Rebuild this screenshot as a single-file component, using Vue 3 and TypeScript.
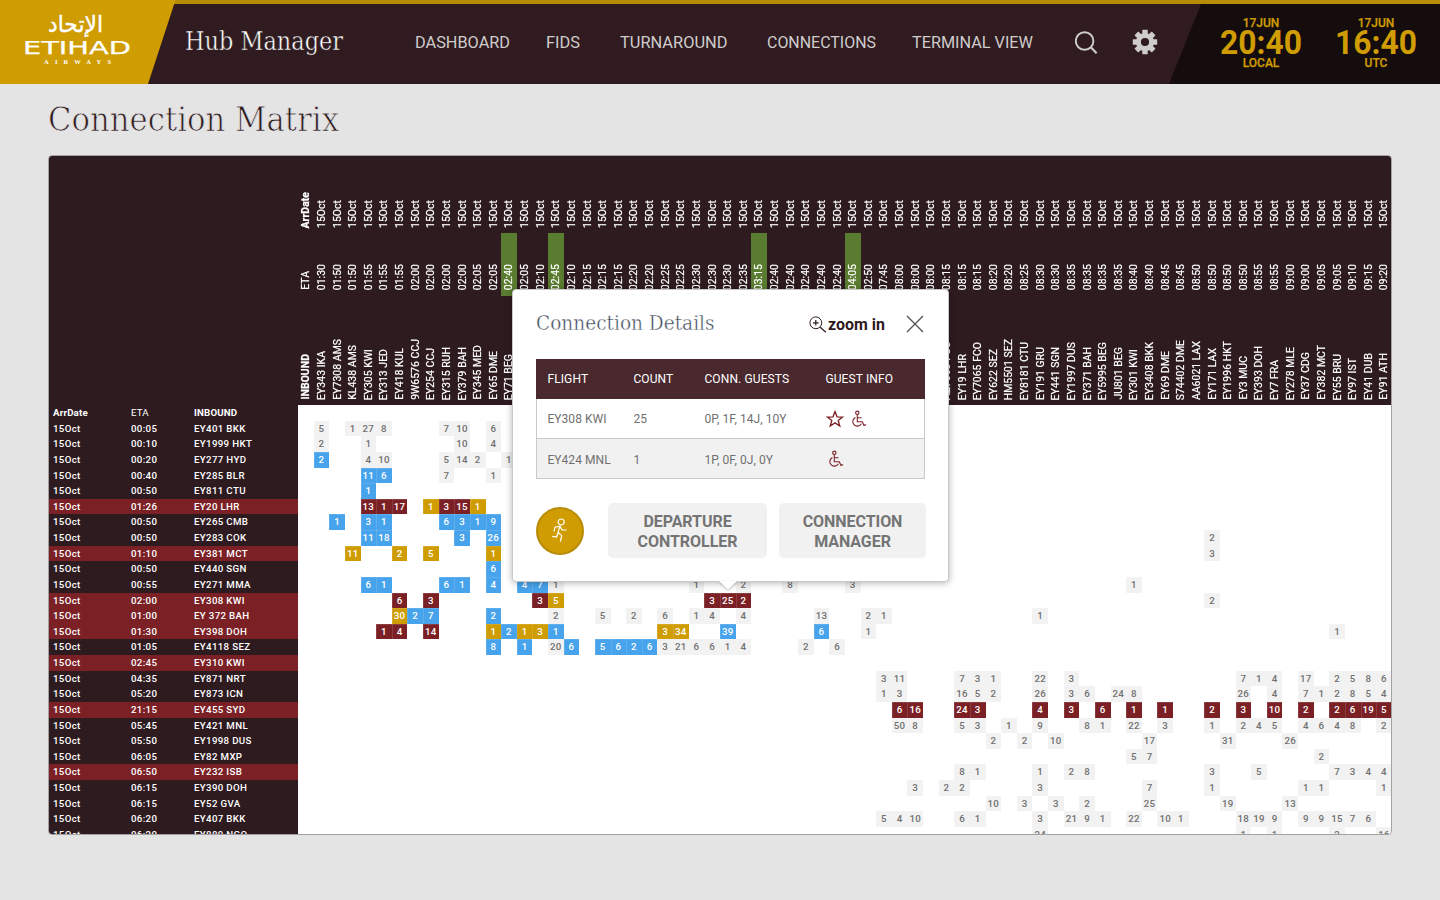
<script setup lang="ts">
import { h, type FunctionalComponent } from 'vue'

interface FitProps { text: string; w: number; size: number; base: number; height: number }

/* One line of text set to an exact measure */
const FitText: FunctionalComponent<FitProps> = (p) =>
  h('svg', { width: p.w, height: p.height, style: { overflow: 'visible', display: 'block' } }, [
    h('text', {
      x: 0, y: p.base, 'font-size': p.size, textLength: p.w, lengthAdjust: 'spacingAndGlyphs', fill: 'currentColor',
    }, p.text),
  ])
FitText.props = ['text', 'w', 'size', 'base', 'height']

const nav = [
  { text: 'DASHBOARD', w: 95, gap: 36 },
  { text: 'FIDS', w: 34, gap: 40 },
  { text: 'TURNAROUND', w: 107.5, gap: 39.5 },
  { text: 'CONNECTIONS', w: 109, gap: 36 },
  { text: 'TERMINAL VIEW', w: 121, gap: 0 },
]

const clocks = [
  { date: '17JUN', time: '20:40', zone: 'LOCAL' },
  { date: '17JUN', time: '16:40', zone: 'UTC' },
]

const etas = (
  '01:30 01:50 01:50 01:55 01:55 01:55 02:00 02:00 02:00 02:00 02:05 02:05 02:40* 02:05 02:10 02:45* ' +
  '02:10 02:15 02:15 02:15 02:20 02:20 02:25 02:25 02:30 02:30 02:30 02:35 03:15* 02:40 02:40 02:40 02:40 02:40 ' +
  '04:05* 02:50 07:45 08:00 08:00 08:00 08:15 08:15 08:15 08:20 08:20 08:25 08:30 08:30 08:35 08:35 08:35 08:35 ' +
  '08:40 08:40 08:45 08:45 08:50 08:50 08:50 08:50 08:55 08:55 09:00 09:00 09:05 09:05 09:10 09:15 09:20'
).split(' ')

const firstFlights = 'EY343 IKA,EY7308 AMS,KL438 AMS,EY305 KWI,EY313 JED,EY418 KUL,9W6576 CCJ,EY254 CCJ,EY315 RUH,EY379 BAH,EY345 MED,EY65 DME,EY71 BEG'.split(',')
const lastFlights = (
  'AZ7063 FCO,EY19 LHR,EY7065 FCO,EY622 SEZ,HM5501 SEZ,EY8181 CTU,EY191 GRU,EY441 SGN,EY1997 DUS,EY371 BAH,EY5995 BEG,' +
  'JU801 BEG,EY301 KWI,EY3408 BKK,EY69 DME,S74402 DME,AA6021 LAX,EY171 LAX,EY1996 HKT,EY3 MUC,EY393 DOH,EY7 FRA,' +
  'EY278 MLE,EY37 CDG,EY382 MCT,EY55 BRU,EY97 IST,EY41 DUB,EY91 ATH'
).split(',')

const columns = etas.map((eta, i) => ({
  eta: eta.replace('*', ''),
  flagged: eta.endsWith('*'),
  flight: i < 13 ? firstFlights[i] : i >= 40 ? lastFlights[i - 40] : '',
}))

/* time | flight | column:count with b = blue, r = red, y = gold; a leading ! flags the row */
const source = `00:05|EY401 BKK|0:5 2:1 3:27 4:8 8:7 9:10 11:6
00:10|EY1999 HKT|0:2 3:1 9:10 11:4
00:20|EY277 HYD|0:2b 3:4 4:10 8:5 9:14 10:2 12:1
00:40|EY285 BLR|3:11b 4:6b 8:7 11:1
00:50|EY811 CTU|3:1b
!01:26|EY20 LHR|3:13r 4:1r 5:17r 7:1y 8:3r 9:15r 10:1y
00:50|EY265 CMB|1:1b 3:3b 4:1b 8:6b 9:3b 10:1b 11:9b
00:50|EY283 COK|3:11b 4:18b 9:3b 11:26b 57:2
!01:10|EY381 MCT|2:11y 5:2y 7:5y 11:1y 57:3
00:50|EY440 SGN|11:6b
00:55|EY271 MMA|3:6b 4:1b 8:6b 9:1b 11:4b 13:4b 14:7b 15:1 24:1 27:2 30:8 34:3 52:1
!02:00|EY308 KWI|5:6r 7:3r 14:3r 15:5y 25:3r 26:25r 27:2r 57:2
!01:00|EY 372 BAH|5:30y 6:2b 7:7b 11:2b 15:2 18:5 20:2 22:6 24:1 25:4 27:4 32:13 35:2 36:1 46:1
!01:30|EY398 DOH|4:1r 5:4r 7:14r 11:1y 12:2b 13:1y 14:3y 15:1b 22:3y 23:34y 26:39b 32:6b 35:1 65:1
01:05|EY4118 SEZ|11:8b 13:1b 15:20 16:6b 18:5b 19:6b 20:2b 21:6b 22:3 23:21 24:6 25:6 26:1 27:4 31:2 33:6
!02:45|EY310 KWI|
04:35|EY871 NRT|36:3 37:11 41:7 42:3 43:1 46:22 48:3 59:7 60:1 61:4 63:17 65:2 66:5 67:8 68:6
05:20|EY873 ICN|36:1 37:3 41:16 42:5 43:2 46:26 48:3 49:6 51:24 52:8 59:26 61:4 63:7 64:1 65:2 66:8 67:5 68:4
!21:15|EY455 SYD|37:6r 38:16r 41:24r 42:3r 46:4r 48:3r 50:6r 52:1r 54:1r 57:2r 59:3r 61:10r 63:2r 65:2r 66:6r 67:19r 68:5r
05:45|EY421 MNL|37:50 38:8 41:5 42:3 44:1 46:9 49:8 50:1 52:22 54:3 57:1 59:2 60:4 61:5 63:4 64:6 65:4 66:8 68:2
05:50|EY1998 DUS|43:2 45:2 47:10 53:17 58:31 62:26
06:05|EY82 MXP|52:5 53:7 64:2
!06:50|EY232 ISB|41:8 42:1 46:1 48:2 49:8 57:3 60:5 65:7 66:3 67:4 68:4
06:15|EY390 DOH|38:3 40:2 41:2 46:3 53:7 57:1 63:1 64:1 68:1
06:15|EY52 GVA|43:10 45:3 47:3 49:2 53:25 58:19 62:13
06:20|EY407 BKK|36:5 37:4 38:10 41:6 42:1 46:3 48:21 49:9 50:1 52:22 54:10 55:1 59:18 60:19 61:9 63:9 64:9 65:15 66:7 67:6
06:20|EY889 NGO|46:24 59:1 61:1 65:2 68:16`

const rows = source.split('\n').map((line) => {
  const [time, flight, list] = line.split('|')
  return {
    late: time.startsWith('!'),
    eta: time.replace('!', ''),
    flight,
    cells: list.split(' ').filter(Boolean).map((c) => {
      const [col, val] = c.split(':')
      return { col: Number(col), n: parseInt(val), tone: /[bry]$/.test(val) ? val.slice(-1) : 'g' }
    }),
  }
})

const details = [
  { flight: 'EY308 KWI', count: 25, guests: '0P, 1F, 14J, 10Y', star: true },
  { flight: 'EY424 MNL', count: 1, guests: '1P, 0F, 0J, 0Y', star: false },
]
</script>

<template>
  <div class="page">
    <header class="top">
      <div class="logo">
        <svg width="176" height="84" viewBox="0 0 176 84">
          <path d="M0 0H175.5L148 84H0Z" fill="#cf9c02" />
          <g fill="#fff">
            <text class="arabic" x="48" y="31.5" textLength="55" lengthAdjust="spacingAndGlyphs">الإتحاد</text>
            <text class="wordmark" x="23" y="54.3" textLength="108" lengthAdjust="spacingAndGlyphs">ETIHAD</text>
            <text class="sub" x="44" y="64" textLength="67">AIRWAYS</text>
          </g>
        </svg>
      </div>
      <FitText class="slab product" text="Hub Manager" :w="158" :size="25.5" :base="50" :height="84" />
      <nav class="nav">
        <FitText v-for="n in nav" :key="n.text" class="navitem" :text="n.text" :w="n.w" :size="16.8" :base="48" :height="84" :style="{ marginRight: n.gap + 'px' }" />
      </nav>
      <svg class="search" width="24" height="24" viewBox="0 0 24 24" fill="none" stroke="#cfcccc" stroke-width="1.9">
        <circle cx="9.6" cy="10" r="8.8" /><path d="M15.6 16l6 6.2" stroke-width="2.1" />
      </svg>
      <svg class="gear" width="26" height="26" viewBox="-13 -13 26 26">
        <g fill="#cfcccc">
          <rect v-for="a in 8" :key="a" x="-2.7" y="-12.2" width="5.4" height="6" rx=".5" :transform="`rotate(${a * 45})`" />
        </g>
        <circle r="6.6" fill="none" stroke="#cfcccc" stroke-width="5" />
      </svg>
      <div class="clocks">
        <div v-for="c in clocks" :key="c.zone" class="clock">
          <span class="small">{{ c.date }}</span>
          <FitText class="time" :text="c.time" :w="82" :size="32.5" :base="24" :height="26" />
          <span class="small">{{ c.zone }}</span>
        </div>
      </div>
    </header>

    <FitText class="slab title" text="Connection Matrix" :w="291" :size="33" :base="47" :height="71" />

    <main class="card">
      <section class="heads">
        <div class="vcol bold">
          <div class="v date"><span>ArrDate</span></div>
          <div class="v eta"><span class="plain">ETA</span></div>
          <div class="v inb"><span>INBOUND</span></div>
        </div>
        <div v-for="(c, i) in columns" :key="i" class="vcol">
          <div class="v date"><span>15Oct</span></div>
          <div class="v eta" :class="{ flagged: c.flagged }"><span>{{ c.eta }}</span></div>
          <div class="v inb"><span>{{ c.flight }}</span></div>
        </div>
      </section>
      <section class="body">
        <div class="row">
          <div class="side head"><b>ArrDate</b><span>ETA</span><b>INBOUND</b></div>
        </div>
        <div v-for="(r, i) in rows" :key="i" class="row">
          <div class="side" :class="{ late: r.late }"><span>15Oct</span><span>{{ r.eta }}</span><span>{{ r.flight }}</span></div>
          <div class="cells">
            <span v-for="c in r.cells" :key="c.col" class="cell" :class="c.tone" :style="{ gridColumn: c.col + 2 }">{{ c.n }}</span>
          </div>
        </div>
      </section>
    </main>

    <div class="modal">
      <div class="mhead">
        <FitText class="slab mtitle" text="Connection Details" :w="178.5" :size="20.5" :base="20" :height="28" />
        <svg class="mag" width="18" height="18" viewBox="0 0 18 18" fill="none" stroke="#2e1a1e" stroke-width="1">
          <circle cx="6.8" cy="6.8" r="5.9" /><path d="M11.2 11.2l5.6 5M6.8 4v5.6M4 6.8h5.6" stroke-width="1.2" />
        </svg>
        <FitText class="zoomin" text="zoom in" :w="57" :size="16" :base="20" :height="28" />
        <svg class="close" width="18" height="18" viewBox="0 0 18 18" stroke="#555" stroke-width="1.4"><path d="M1 1l16 16M17 1L1 17" /></svg>
      </div>
      <div class="mtable">
        <div class="mrow mth"><span>FLIGHT</span><span>COUNT</span><span>CONN. GUESTS</span><span>GUEST INFO</span></div>
        <div v-for="d in details" :key="d.flight" class="mrow">
          <span>{{ d.flight }}</span><span>{{ d.count }}</span><span>{{ d.guests }}</span>
          <span class="icons" :class="{ solo: !d.star }">
            <svg v-if="d.star" width="18" height="18" viewBox="0 0 18 18" fill="none" stroke="#7b2024" stroke-width="1.3">
              <path d="M9 1.6l2 5.2 5.6.2-4.4 3.5 1.6 5.6L9 12.9l-4.8 3.2 1.6-5.6L1.4 7l5.6-.2z" />
            </svg>
            <svg width="16" height="18" viewBox="0 0 16 18" fill="none" stroke="#7b2024" stroke-width="1.1">
              <circle cx="6.3" cy="2.8" r="1.7" />
              <path d="M6.3 4.6v7.2h5l1.7 3.6 2.1-1M6.3 7.8h4.2M4.4 7.4a4.6 4.6 0 1 0 6 6.4" />
            </svg>
          </span>
        </div>
      </div>
      <div class="actions">
        <div class="run">
          <svg width="18" height="26" viewBox="0 0 18 26" fill="none" stroke="#fff" stroke-width="1.2">
            <circle cx="10.2" cy="4" r="3" />
            <path d="M3 13.5l1-4.3 5-1 2 3.6 4.5.2M8.8 8.2l-1.7 6.2 3.6 3.2-1.3 6M7.1 14.4L5.6 19l-4.4-.6" />
          </svg>
        </div>
        <button class="b1">DEPARTURE<br>CONTROLLER</button>
        <button class="b2">CONNECTION<br>MANAGER</button>
      </div>
      <svg class="tip" width="20" height="10" viewBox="0 0 20 10"><path d="M1 0h18l-9 8.8z" fill="#fff" /></svg>
    </div>
  </div>
</template>

<style>
body { margin: 0; background: #e4e4e4; }
</style>

<style scoped>
.page { position: relative; width: 1440px; height: 900px; overflow: hidden; background: #e4e4e4; font-family: Roboto, "Liberation Sans", sans-serif; }
.top { display: flex; height: 84px; background: linear-gradient(#b98c07 4px, #2f1b20 4px); }
.logo { width: 184.5px; flex: none; }
.logo svg { display: block; }
.arabic { font: 23px "DejaVu Sans", sans-serif; stroke: #fff; stroke-width: .4px; }
.wordmark { font: 17.8px "DejaVu Sans", sans-serif; stroke: #fff; stroke-width: .25px; }
.sub { font: bold 6.5px "Liberation Serif", serif; }
.slab { font-family: "DejaVu Serif Condensed", "DejaVu Serif", serif; font-stretch: condensed; flex: none; }
.product { color: #fff; stroke: #2f1b20; stroke-width: .45px; }
.nav { display: flex; margin-left: 72.5px; color: #cfcccc; width: 618px; flex: none; }
.navitem { flex: none; }
.search { margin: 31px 0 0 42px; flex: none; }
.gear { margin: 29px 0 0 33px; flex: none; }
.clocks { margin: 4px 0 0 auto; width: 271px; flex: none; height: 80px; background: #150c0d; clip-path: polygon(32px 0, 100% 0, 100% 100%, 0 100%); color: #cf9c02; display: flex; font-weight: 700; }
.clock { width: 82px; display: flex; flex-direction: column; align-items: center; margin: 13px 0 0 51px; }
.clock + .clock { margin-left: 33px; }
.small { font-size: 12px; font-weight: 500; line-height: 13px; height: 13px; -webkit-text-stroke: .25px #cf9c02; }
.time { margin-bottom: 1px; }
.title { margin-left: 48px; color: #2f1b20; stroke: #e4e4e4; stroke-width: .75px; }

.card { box-sizing: border-box; margin-left: 48px; width: 1344px; height: 680px; border: 1px solid #a3a1a1; border-radius: 4px; overflow: hidden; background: #fff; }
.heads { display: flex; height: 249px; padding-left: 249px; background: #2e1b1f; color: #fff; font-size: 10.4px; letter-spacing: .06px; width: 1100px; }
.vcol { width: 15.63px; flex: none; }
.bold { font-weight: 700; }
.plain { font-weight: 400; }
.v { display: flex; align-items: flex-end; justify-content: center; box-sizing: border-box; padding-bottom: 5px; }
.v span { writing-mode: vertical-rl; transform: rotate(180deg); line-height: 15px; white-space: nowrap; -webkit-text-stroke: .2px #fff; }
.date { height: 77px; }
.eta { height: 62.5px; padding-bottom: 5.5px; }
.inb { height: 109.5px; }
.flagged { background: #5a7c30; }
.body { font-size: 9.7px; font-weight: 500; }
.row { display: flex; height: 15.63px; }
.side { width: 249px; flex: none; box-sizing: border-box; padding-left: 4px; display: grid; grid-template-columns: 78px 63px 1fr; background: #2e1b1f; color: #fff; line-height: 15.6px; letter-spacing: .34px; }
.side.late { background: #7b2126; }
.side b { font-weight: 700; }
.head { letter-spacing: .18px; }
.head span { font-weight: 400; }
.cells { display: grid; grid-template-columns: repeat(70, 15.63px); grid-template-rows: 15.63px; width: 1093px; overflow: hidden; }
.cell { text-align: center; line-height: 15.6px; color: #fff; letter-spacing: .2px; box-shadow: inset .5px .5px rgba(255, 255, 255, .25); }
.g { background: #f2f2f2; color: #707070; }
.b { background: #47a3eb; }
.r { background: #7b2126; }
.y { background: #cf9c02; }

.modal { position: absolute; left: 512px; top: 289px; width: 437px; height: 293px; box-sizing: border-box; padding: 0 22px 0 23px; background: #fff; border: 1px solid #c9c9c9; border-radius: 4px; box-shadow: 0 1px 7px rgba(0, 0, 0, .3); }
.mhead { display: flex; height: 69px; padding-top: 20px; box-sizing: border-box; }
.mtitle { color: #3e4a58; stroke: #fff; stroke-width: .4px; }
.mag { margin: 6px 0 0 94.5px; }
.zoomin { margin-left: 1px; font-weight: 700; color: #2e1a1e; }
.close { margin: 5px 0 0 21px; }
.mtable { width: 389px; height: 120px; box-sizing: border-box; border: 1px solid #c9c9c9; border-top: 0; font-size: 12px; color: #707070; }
.mrow { display: grid; grid-template-columns: 86px 71px 121px 1fr; padding-left: 10.4px; line-height: 41px; height: 39px; letter-spacing: .06px; }
.mth { background: #49282e; color: #fff; margin: 0 -1px; padding-left: 11.4px; height: 40px; line-height: 41px; letter-spacing: .12px; }
.mrow:last-child { background: #f1f1f1; border-top: 1px solid #c9c9c9; line-height: 42px; }
.icons { display: flex; align-items: center; gap: 7px; height: 40px; padding-left: .6px; }
.icons.solo { padding-left: 3px; }
.actions { display: flex; margin-top: 24px; }
.run { width: 48px; height: 48px; box-sizing: border-box; border: 2px solid #b98c07; border-radius: 50%; background: #cf9c02; margin-top: 4px; display: flex; align-items: center; justify-content: center; }
button { border: 0; border-radius: 5px; background: #f1f1f1; color: #747474; font: 700 16px/20px Roboto, sans-serif; letter-spacing: -.05px; height: 55px; padding: 2px 0 0; }
.b1 { width: 159px; margin-left: 24px; }
.b2 { width: 147px; margin-left: 12px; }
.tip { position: absolute; left: 205px; top: 291px; filter: drop-shadow(0 1px 1px rgba(0, 0, 0, .25)); }
</style>
